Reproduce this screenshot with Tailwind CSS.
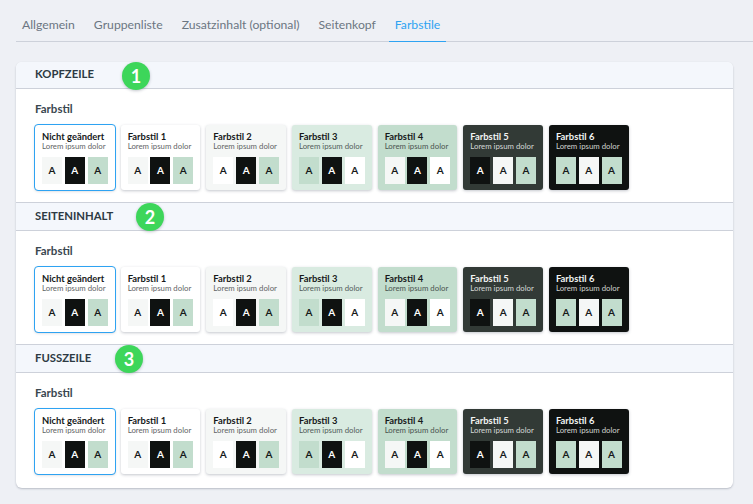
<!DOCTYPE html>
<html lang="de">

<head>
    <meta charset="UTF-8">
    <meta name="viewport" content="width=device-width, initial-scale=1.0">
    <title>Farbstile</title>
    <script src="https://cdn.jsdelivr.net/npm/@tailwindcss/browser@4"></script>
</head>

<body class="h-[504px] overflow-hidden bg-[#eef0f5] font-['Lato',sans-serif] text-[#2d3a43]">
    <nav class="ml-4 flex h-[42px] gap-[7px] border-b border-[#cdd1da] pt-[16px] text-[12.2px] leading-[18px] text-[#6b7682]">
        <a class="h-[26px] px-[6px]">Allgemein</a>
        <a class="h-[26px] px-[6px]">Gruppenliste</a>
        <a class="h-[26px] px-[6px]">Zusatzinhalt (optional)</a>
        <a class="h-[26px] px-[6px]">Seitenkopf</a>
        <a class="h-[26px] border-b border-[#2ea3f2] px-[6px] text-[#2ea3f2]">Farbstile</a>
    </nav>

    <main id="panel" class="relative mt-5 ml-4 h-[426px] w-[717px] rounded-md bg-white shadow-[0_1px_2px_rgba(60,70,90,0.3)]"></main>

    <script>
        const white = 'bg-white', pale = 'bg-[#f5f7f6]', mint = 'bg-[#c2ddcd]', black = 'bg-[#0f1211]';

        // card background, text colours, three swatches
        const cards = [
            { name: 'Nicht geändert', bg: 'bg-white', outer: 'outline outline-[1.5px] outline-[#2ea3f2]', title: 'text-[#16191a]', sub: 'text-[#5f6465]', sw: [pale, black, mint] },
            { name: 'Farbstil 1', bg: 'bg-white', outer: '', title: 'text-[#16191a]', sub: 'text-[#5f6465]', sw: [pale, black, mint] },
            { name: 'Farbstil 2', bg: 'bg-[#f5f7f6]', outer: '', title: 'text-[#16191a]', sub: 'text-[#5f6465]', sw: [white, black, mint] },
            { name: 'Farbstil 3', bg: 'bg-[#d9ebe1]', outer: '', title: 'text-[#16191a]', sub: 'text-[#525c5a]', sw: [mint, black, white] },
            { name: 'Farbstil 4', bg: 'bg-[#c2ddcd]', outer: '', title: 'text-[#16191a]', sub: 'text-[#49534f]', sw: [pale, black, white] },
            { name: 'Farbstil 5', bg: 'bg-[#323a36]', outer: '', title: 'text-[#f2f4f3]', sub: 'text-[#d5d9d7]', sw: [black, pale, mint] },
            { name: 'Farbstil 6', bg: 'bg-[#0f1211]', outer: '', title: 'text-[#f2f4f3]', sub: 'text-[#cfd2d0]', sw: [mint, pale, mint] },
        ];

        const sections = [
            { title: 'KOPFZEILE', n: 1, head: 'h-[27px] rounded-t-md border-b', badge: 'left-[106px] top-0' },
            { title: 'SEITENINHALT', n: 2, head: 'h-[29px] border-y', badge: 'left-[120px] top-0' },
            { title: 'FUSSZEILE', n: 3, head: 'h-[29px] border-y', badge: 'left-[99px] top-0' },
        ];

        function swatch(bg) {
            const text = (bg === black) ? 'text-white' : 'text-[#16191a]';
            return `<span class="flex h-[27px] w-[20px] items-center justify-center text-[10px] font-bold ${bg} ${text}">A</span>`;
        }

        function card(c) {
            return `
            <div class="h-[65px] w-[79.67px] shrink-0 rounded-[3px] px-[7px] pt-[6px] shadow-[0_1px_3px_rgba(60,70,90,0.3)] ${c.bg} ${c.outer}">
                <div class="h-[12px] whitespace-nowrap text-[9.4px] leading-[12px] font-bold ${c.title}">${c.name}</div>
                <div class="h-[14px] whitespace-nowrap text-[7.8px] leading-[6px] ${c.sub}">Lorem ipsum dolor</div>
                <div class="flex justify-between">${c.sw.map(swatch).join('')}</div>
            </div>`;
        }

        document.getElementById('panel').innerHTML = sections.map((s) => `
            <section>
                <header class="relative flex items-center border-[#cdd1da] bg-[#f4f7fc] pb-[1px] pl-[19px] text-[11.3px] font-bold ${s.head}">
                    ${s.title}
                    <span class="absolute ${s.badge} flex size-[28px] items-center justify-center rounded-full bg-[#3dd65a] text-[18px] font-bold text-white shadow-[0_1px_3px_rgba(60,70,90,0.3)]">${s.n}</span>
                </header>
                <div class="h-[113px] px-[19px] pt-[13px]">
                    <div class="h-[23px] text-[11.5px] leading-[14px] font-bold text-[#3a4750]">Farbstil</div>
                    <div class="flex gap-[6px]">${cards.map(card).join('')}</div>
                </div>
            </section>`).join('');
    </script>
</body>

</html>
